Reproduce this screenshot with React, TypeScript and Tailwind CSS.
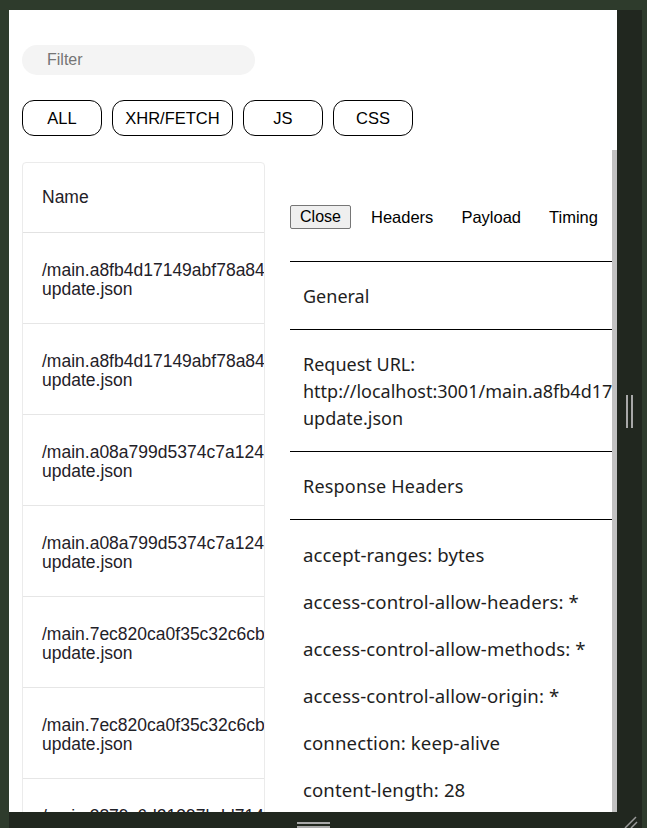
export default function App() {
  const rows: [string, string][] = [
    ["/main.a8fb4d17149abf78a84f.hot-", "update.json"],
    ["/main.a8fb4d17149abf78a84f.hot-", "update.json"],
    ["/main.a08a799d5374c7a1243b.hot-", "update.json"],
    ["/main.a08a799d5374c7a1243b.hot-", "update.json"],
    ["/main.7ec820ca0f35c32c6cb1.hot-", "update.json"],
    ["/main.7ec820ca0f35c32c6cb1.hot-", "update.json"],
    ["/main.3879c6d21397bdd71463.hot-", "update.json"],
  ];
  const headers = [
    "accept-ranges: bytes",
    "access-control-allow-headers: *",
    "access-control-allow-methods: *",
    "access-control-allow-origin: *",
    "connection: keep-alive",
    "content-length: 28",
    "content-type: application/json; charset=UTF-8",
  ];
  const arial = "font-['Liberation_Sans',Arial,sans-serif]";
  return (
    <div className="w-[647px] h-[828px] bg-[#2e3b2c] pl-[9px] pt-[10px] pr-[5px] flex flex-col overflow-hidden">
      <div className="flex flex-1 min-h-0">
        <div className={`w-[608px] bg-white overflow-hidden flex flex-col ${arial}`}>
          <div className="pl-[13px] pt-[35px]">
            <div className="w-[233px] h-[30px] rounded-full bg-[#f4f4f4] pl-[25px] flex items-center text-[16px] text-[#757575]">
              Filter
            </div>
          </div>
          <div className="flex gap-[10px] pl-[13px] mt-[25px]">
            {[
              ["ALL", "w-[80px]"],
              ["XHR/FETCH", "w-[121px]"],
              ["JS", "w-[80px]"],
              ["CSS", "w-[80px]"],
            ].map(([t, w]) => (
              <div
                key={t}
                className={`${w} h-[36px] rounded-[12px] border border-black flex items-center justify-center text-[16.5px] text-black`}
              >
                {t}
              </div>
            ))}
          </div>
          <div className="flex flex-1 min-h-0 mt-[14px]">
            <div className="w-[256px] pl-[13px] pt-[12px] shrink-0">
              <div className="w-[243px] border border-[#ebebeb] rounded-t-[4px] overflow-hidden text-[#1f2128]">
                <div className="h-[70px] border-b border-[#e2e2e2] px-[19px] flex items-center text-[17.5px]">
                  Name
                </div>
                {rows.map((r, i) => (
                  <div
                    key={i}
                    className="h-[91px] border-b border-[#e6e6e6] pl-[19px] pt-[28px] text-[17.5px] leading-[19px] whitespace-nowrap"
                  >
                    <div>{r[0]}</div>
                    <div>{r[1]}</div>
                  </div>
                ))}
              </div>
            </div>
            <div className="ml-[25px] w-[322px] shrink-0 overflow-hidden">
              <div className="pt-[55px] flex items-center h-[79px] text-[16.5px] text-black">
                <div className="w-[61px] h-[24px] border border-[#767676] bg-[#efefef] rounded-[2px] flex items-center justify-center text-[16px]">
                  Close
                </div>
                <span className="ml-[20px]">Headers</span>
                <span className="ml-[28px]">Payload</span>
                <span className="ml-[28px]">Timing</span>
              </div>
              <div className="mt-[32px] font-['Noto_Sans',sans-serif] text-[18px] leading-[27px] text-[#1e1e1e] whitespace-nowrap">
                <div className="border-t border-black pl-[13px] pt-[21px] pb-[19px]">General</div>
                <div className="border-t border-black pl-[13px] pt-[21px] pb-[19px]">
                  <div>Request URL:</div>
                  <div>http://localhost:3001/main.a8fb4d17149abf78a84f.hot-</div>
                  <div>update.json</div>
                </div>
                <div className="border-t border-black pl-[13px] pt-[21px] pb-[19px] tracking-[0.2px]">Response Headers</div>
                <div className="border-t border-black pl-[13px] pt-[21px] flex flex-col gap-[20px] text-[18.6px] tracking-[0.1px]">
                  {headers.map((h) => (
                    <div key={h}>{h}</div>
                  ))}
                </div>
              </div>
            </div>
            <div className="w-[5px] bg-[#c1c1c1] shrink-0" />
          </div>
        </div>
        <div className="w-[25px] bg-[#21271f] flex items-center justify-center gap-[2.5px]">
          <div className="w-[2px] h-[33px] bg-[#a8a8a8]" />
          <div className="w-[2px] h-[33px] bg-[#a8a8a8]" />
        </div>
      </div>
      <div className="h-[16px] bg-[#21271f] flex shrink-0">
        <div className="w-[608px] flex justify-center pt-[10px]">
          <div className="flex flex-col gap-[2px]">
            <div className="w-[33px] h-[2px] bg-[#a8a8a8]" />
            <div className="w-[33px] h-[2px] bg-[#a8a8a8]" />
          </div>
        </div>
        <div className="w-[25px] relative">
          <svg width="25" height="16" viewBox="0 0 25 16" className="block">
            <line x1="8" y1="16" x2="19" y2="5" stroke="#9a9a9a" strokeWidth="1.5" />
            <line x1="14" y1="16" x2="20" y2="10" stroke="#9a9a9a" strokeWidth="1.5" />
          </svg>
        </div>
      </div>
    </div>
  );
}
